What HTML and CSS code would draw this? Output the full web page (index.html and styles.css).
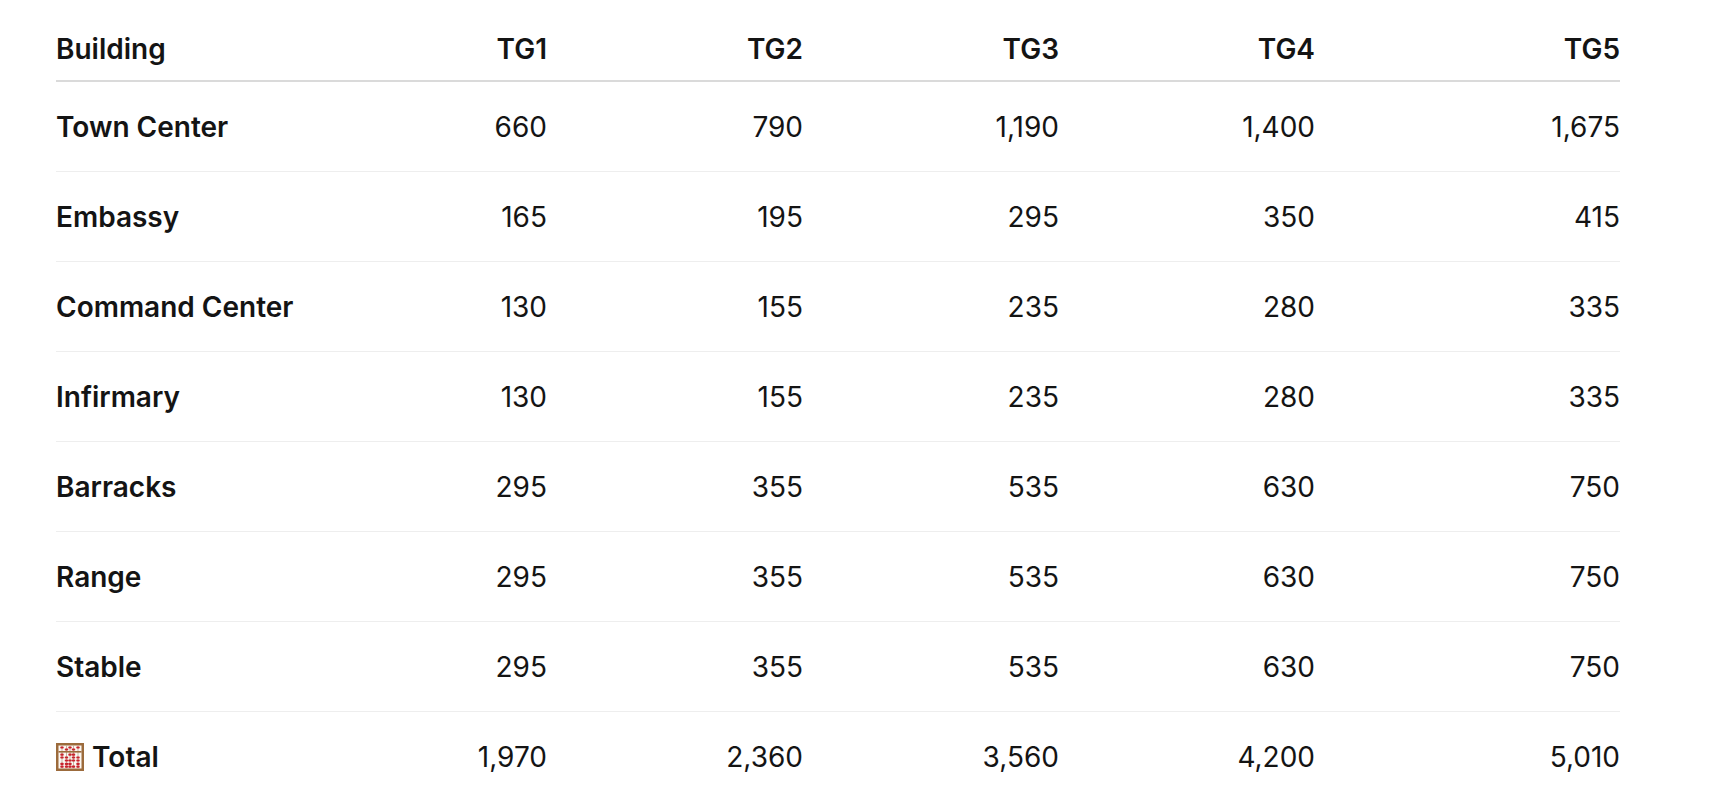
FILE: index.html
```html
<!DOCTYPE html>
<html lang="en">
<head>
<meta charset="utf-8">
<title>Building costs</title>
<link rel="stylesheet" href="styles.css">
</head>
<body>
<div class="page">
  <table class="costs">
    <colgroup>
      <col class="c-name">
      <col class="c-num">
      <col class="c-num">
      <col class="c-num">
      <col class="c-num">
      <col class="c-last">
    </colgroup>
    <thead>
      <tr><th class="name">Building</th><th>TG1</th><th>TG2</th><th>TG3</th><th>TG4</th><th>TG5</th></tr>
    </thead>
    <tbody>
      <tr><th class="name">Town Center</th><td>660</td><td>790</td><td>1,190</td><td>1,400</td><td>1,675</td></tr>
      <tr><th class="name">Embassy</th><td>165</td><td>195</td><td>295</td><td>350</td><td>415</td></tr>
      <tr><th class="name">Command Center</th><td>130</td><td>155</td><td>235</td><td>280</td><td>335</td></tr>
      <tr><th class="name">Infirmary</th><td>130</td><td>155</td><td>235</td><td>280</td><td>335</td></tr>
      <tr><th class="name">Barracks</th><td>295</td><td>355</td><td>535</td><td>630</td><td>750</td></tr>
      <tr><th class="name">Range</th><td>295</td><td>355</td><td>535</td><td>630</td><td>750</td></tr>
      <tr><th class="name">Stable</th><td>295</td><td>355</td><td>535</td><td>630</td><td>750</td></tr>
      <tr class="total">
        <th class="name"><svg class="abacus" viewBox="0 0 28 28" width="28" height="28" aria-hidden="true">
          <rect x="0" y="0" width="28" height="28" fill="#9c6b3c"/>
          <rect x="2.5" y="2.5" width="23" height="23" fill="#fbf7f2"/>
          <g stroke="#b9a48e" stroke-width="0.8">
            <line x1="6" y1="2.5" x2="6" y2="25.5"/>
            <line x1="10.5" y1="2.5" x2="10.5" y2="25.5"/>
            <line x1="14" y1="2.5" x2="14" y2="25.5"/>
            <line x1="17.5" y1="2.5" x2="17.5" y2="25.5"/>
            <line x1="22" y1="2.5" x2="22" y2="25.5"/>
          </g>
          <rect x="2.5" y="8" width="23" height="1.6" fill="#9c6b3c"/>
          <g fill="#c8232c">
            <rect x="4.3" y="3.4" width="3.4" height="2.2" rx="0.8"/>
            <rect x="8.8" y="5.4" width="3.4" height="2.2" rx="0.8"/>
            <rect x="12.3" y="3.4" width="3.4" height="2.2" rx="0.8"/>
            <rect x="15.8" y="5.4" width="3.4" height="2.2" rx="0.8"/>
            <rect x="20.3" y="3.4" width="3.4" height="2.2" rx="0.8"/>

            <rect x="4.3" y="10.6" width="3.4" height="2.2" rx="0.8"/>
            <rect x="4.3" y="13.4" width="3.4" height="2.2" rx="0.8"/>
            <rect x="4.3" y="19.8" width="3.4" height="2.2" rx="0.8"/>
            <rect x="4.3" y="22.6" width="3.4" height="2.2" rx="0.8"/>

            <rect x="8.8" y="13.4" width="3.4" height="2.2" rx="0.8"/>
            <rect x="8.8" y="16.4" width="3.4" height="2.2" rx="0.8"/>
            <rect x="8.8" y="19.8" width="3.4" height="2.2" rx="0.8"/>
            <rect x="8.8" y="22.6" width="3.4" height="2.2" rx="0.8"/>

            <rect x="12.3" y="10.6" width="3.4" height="2.2" rx="0.8"/>
            <rect x="12.3" y="16.4" width="3.4" height="2.2" rx="0.8"/>
            <rect x="12.3" y="19.8" width="3.4" height="2.2" rx="0.8"/>
            <rect x="12.3" y="22.6" width="3.4" height="2.2" rx="0.8"/>

            <rect x="15.8" y="10.6" width="3.4" height="2.2" rx="0.8"/>
            <rect x="15.8" y="13.4" width="3.4" height="2.2" rx="0.8"/>
            <rect x="15.8" y="16.4" width="3.4" height="2.2" rx="0.8"/>
            <rect x="15.8" y="22.6" width="3.4" height="2.2" rx="0.8"/>

            <rect x="20.3" y="13.4" width="3.4" height="2.2" rx="0.8"/>
            <rect x="20.3" y="16.4" width="3.4" height="2.2" rx="0.8"/>
            <rect x="20.3" y="19.8" width="3.4" height="2.2" rx="0.8"/>
            <rect x="20.3" y="22.6" width="3.4" height="2.2" rx="0.8"/>
          </g>
        </svg> Total</th>
        <td>1,970</td><td>2,360</td><td>3,560</td><td>4,200</td><td>5,010</td>
      </tr>
    </tbody>
  </table>
</div>
</body>
</html>
```

FILE: styles.css
```css
html, body {
  margin: 0;
  padding: 0;
  background: #ffffff;
}

.page {
  padding: 18px 0 0 56px;
  font-family: Inter, "Noto Sans", "Liberation Sans", sans-serif;
  color: #141414;
}

.costs {
  width: 1564px;
  border-collapse: collapse;
  table-layout: fixed;
  font-size: 28px;
  line-height: 36px;
}

.c-name { width: 235px; }
.c-num { width: 256px; }
.c-last { width: 305px; }

.costs th,
.costs td {
  padding: 0;
  text-align: right;
  white-space: nowrap;
  vertical-align: middle;
}

.costs th {
  font-weight: 600;
}

.costs td {
  font-weight: 400;
}

.costs .name {
  text-align: left;
}

.costs thead th {
  padding: 13px 0 13px;
  border-bottom: 2px solid #dadada;
}

.costs tbody th,
.costs tbody td {
  padding: 27px 0 26px;
  border-bottom: 1px solid #eeeeee;
}

.costs tbody tr.total th,
.costs tbody tr.total td {
  border-bottom: none;
}

.abacus {
  display: inline-block;
  width: 28px;
  height: 28px;
  vertical-align: -4px;
  margin-right: 1px;
}
```
